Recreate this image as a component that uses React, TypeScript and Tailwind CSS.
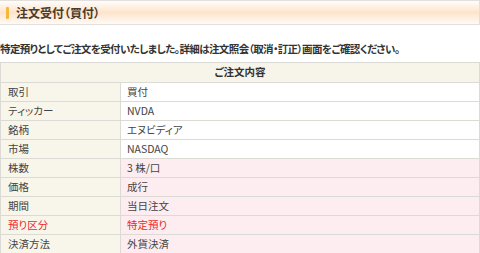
import React from 'react';

type Row = { label: string; value: string; pink?: boolean; red?: boolean };

const rows: Row[] = [
  { label: '取引', value: '買付' },
  { label: 'ティッカー', value: 'NVDA' },
  { label: '銘柄', value: 'エヌビディア' },
  { label: '市場', value: 'NASDAQ' },
  { label: '株数', value: '3 株/口', pink: true },
  { label: '価格', value: '成行', pink: true },
  { label: '期間', value: '当日注文', pink: true },
  { label: '預り区分', value: '特定預り', pink: true, red: true },
  { label: '決済方法', value: '外貨決済', pink: true },
];

const App: React.FC = () => {
  return (
    <div className="w-[480px] h-[253px] overflow-hidden bg-white text-[#333] font-['Noto_Sans_CJK_JP','Noto_Sans',sans-serif] [font-feature-settings:'palt']">
      {/* title bar */}
      <div className="h-[25px] flex items-center border-t border-r border-b border-[#e2e0dc] bg-gradient-to-b from-[#fffdfb] via-[#fde4cc] to-[#fffaf5]">
        <span className="ml-[6px] w-[3px] h-[12px] bg-[#f6b73c] rounded-[1px]"></span>
        <h1 className="ml-[7px] text-[12px] font-bold text-[#4b3b2b] leading-none">注文受付（買付）</h1>
      </div>

      <p className="mt-[16px] text-[10.5px] tracking-[-0.6px] font-bold leading-[16px] text-[#333] whitespace-nowrap">
        特定預りとしてご注文を受付いたしました。詳細は注文照会（取消・訂正）画面をご確認ください。
      </p>

      <table className="mt-[5px] w-full border-collapse text-[10.5px] leading-none">
        <thead>
          <tr>
            <th colSpan={2} className="h-[20px] border border-[#dcdad4] bg-[#f7f5ea] font-bold text-center text-[#333]">
              ご注文内容
            </th>
          </tr>
        </thead>
        <tbody>
          {rows.map((r) => (
            <tr key={r.label} className="h-[19px]">
              <td className={`w-[120px] pl-[7px] border border-[#dcdad4] bg-[#f8f6ea] ${r.red ? 'text-[#f02828]' : 'text-[#444]'}`}>
                {r.label}
              </td>
              <td className={`pl-[6px] border border-[#dcdad4] ${r.pink ? 'bg-[#fdedf0]' : 'bg-white'} ${r.red ? 'text-[#f02828]' : 'text-[#444]'}`}>
                {r.value}
              </td>
            </tr>
          ))}
        </tbody>
      </table>
    </div>
  );
};

export default App;
